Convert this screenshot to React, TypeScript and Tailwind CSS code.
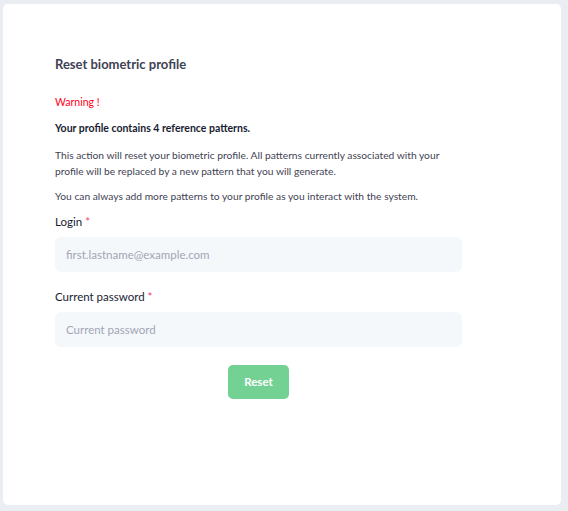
import React from "react";

const App = () => {
  return (
    <div
      className="w-[568px] h-[511px] bg-[#eaedf1] pt-[4px] pl-[3px]"
      style={{ fontFamily: "Lato, 'Open Sans', sans-serif" }}
    >
      <div className="w-[558px] h-[501px] bg-white rounded-[5px] pt-[50px] pl-[52px]">
        <div className="w-[407px] flex flex-col">
          {/* Heading */}
          <h1 className="text-[13px] leading-[20px] font-bold text-[#3f4254]">
            Reset biometric profile
          </h1>

          <p className="mt-[20px] text-[10.5px] leading-[16px] text-[#ff0022]">
            Warning !
          </p>

          <p className="mt-[10px] text-[10.5px] leading-[16px] font-bold text-[#181c32]">
            Your profile contains 4 reference patterns.
          </p>

          <p className="mt-[11px] text-[10.25px] leading-[16px] text-[#3f4254]">
            This action will reset your biometric profile. All patterns currently associated with your
            profile will be replaced by a new pattern that you will generate.
          </p>

          <p className="mt-[9px] text-[10.25px] leading-[16px] text-[#3f4254]">
            You can always add more patterns to your profile as you interact with the system.
          </p>

          {/* Form */}
          <label className="mt-[10px] text-[11.5px] leading-[16px] text-[#181c32]">
            Login<span className="ml-[3px] text-[#f1416c]">*</span>
          </label>
          <input
            className="mt-[7px] h-[35px] w-full rounded-[6px] bg-[#f5f8fa] px-[11px] text-[11.5px] text-[#3f4254] placeholder:text-[#a1a5b7] outline-none"
            placeholder="first.lastname@example.com"
          />

          <label className="mt-[17px] text-[11.5px] leading-[16px] text-[#181c32]">
            Current password<span className="ml-[3px] text-[#f1416c]">*</span>
          </label>
          <input
            type="password"
            className="mt-[7px] h-[35px] w-full rounded-[6px] bg-[#f5f8fa] px-[11px] text-[11.5px] text-[#3f4254] placeholder:text-[#a1a5b7] outline-none"
            placeholder="Current password"
          />

          <div className="mt-[18px] flex justify-center">
            <button className="h-[34px] w-[61px] rounded-[5px] bg-[#74d194] text-white text-[11.5px] font-bold">
              Reset
            </button>
          </div>
        </div>
      </div>
    </div>
  );
};

export default App;
